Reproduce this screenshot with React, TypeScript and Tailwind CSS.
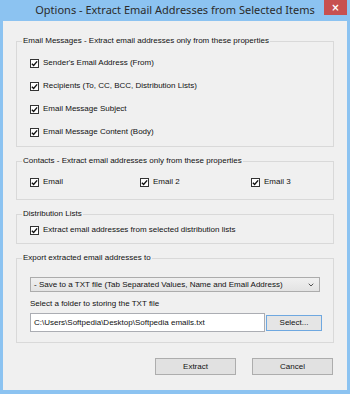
import { ChevronDown } from "lucide-react";

const ui = "font-['Liberation_Sans',Arial,sans-serif] text-[8px] leading-[10px] text-[#111]";

function Check({ label }: { label: string }) {
  return (
    <div className="flex h-[12px] items-center gap-[4px]">
      <span className="flex h-[9px] w-[9px] shrink-0 items-center justify-center border border-[#333] bg-white">
        <svg viewBox="0 0 8 8" className="h-[7px] w-[7px]">
          <path d="M1 4.2 L3 6.2 L7 1.6" fill="none" stroke="#111" strokeWidth="1.6" />
        </svg>
      </span>
      <span className="whitespace-nowrap">{label}</span>
    </div>
  );
}

function Group({ title, className, children }: { title: string; className: string; children: React.ReactNode }) {
  return (
    <fieldset className={`border border-[#d9d9d9] ${className}`}>
      <legend className="ml-[5px] px-[1px] whitespace-nowrap">{title}</legend>
      <div className="pl-[13px]">{children}</div>
    </fieldset>
  );
}

export default function App() {
  return (
    <div className="flex h-[394px] w-[350px] flex-col bg-[#8cc3f1]">
      <div className="relative flex h-[21px] items-center justify-center">
        <span className="font-['Noto_Sans',sans-serif] text-[11px] text-[#2b2b2b] whitespace-nowrap">
          Options - Extract Email Addresses from Selected Items
        </span>
        <span className="absolute right-[3px] top-0 flex h-[15px] w-[23px] items-center justify-center bg-[#c75050] font-['DejaVu_Sans',sans-serif] text-[10px] font-bold text-white">
          ×
        </span>
      </div>

      <div className={`mx-[3px] mb-[4px] flex flex-1 flex-col bg-[#f0f0f0] px-[13px] pt-[15px] ${ui}`}>
        <Group title="Email Messages - Extract email addresses only from these properties" className="pt-[11px] pb-[8px]">
          <div className="flex flex-col gap-[11px]">
            <Check label="Sender's Email Address (From)" />
            <Check label="Recipients (To, CC, BCC, Distribution Lists)" />
            <Check label="Email Message Subject" />
            <Check label="Email Message Content (Body)" />
          </div>
        </Group>

        <Group title="Contacts - Extract email addresses only from these properties" className="mt-[9px] pt-[10px] pb-[11px]">
          <div className="grid grid-cols-[110px_111px_auto]">
            <Check label="Email" />
            <Check label="Email 2" />
            <Check label="Email 3" />
          </div>
        </Group>

        <Group title="Distribution Lists" className="mt-[9px] pt-[5px] pb-[7px]">
          <Check label="Extract email addresses from selected distribution lists" />
        </Group>

        <Group title="Export extracted email addresses to" className="mt-[9px] pt-[14px] pb-[10px]">
          <div className="flex h-[15px] w-[290px] items-center justify-between border border-[#acacac] bg-gradient-to-b from-[#f0f0f0] to-[#e3e3e3] pl-[3px] pr-[4px]">
            <span className="whitespace-nowrap">- Save to a TXT file (Tab Separated Values, Name and Email Address)</span>
            <ChevronDown size={8} strokeWidth={2.5} className="text-[#333]" />
          </div>
          <div className="mt-[7px]">Select a folder to storing the TXT file</div>
          <div className="mt-[4px] flex items-center">
            <div className="flex h-[19px] w-[235px] items-center border border-[#abadb3] bg-white px-[3px]">
              C:\Users\Softpedia\Desktop\Softpedia emails.txt
            </div>
            <div className="ml-[1px] flex h-[16px] w-[56px] items-center justify-center border border-[#6fa8e0] bg-[#e5e5e5]">
              Select...
            </div>
          </div>
        </Group>

        <div className="mt-[15px] flex justify-end gap-[16px] pr-[1px]">
          <div className="flex h-[17px] w-[81px] items-center justify-center border border-[#adadad] bg-[#e1e1e1]">Extract</div>
          <div className="flex h-[17px] w-[81px] items-center justify-center border border-[#adadad] bg-[#e1e1e1]">Cancel</div>
        </div>
      </div>
    </div>
  );
}
